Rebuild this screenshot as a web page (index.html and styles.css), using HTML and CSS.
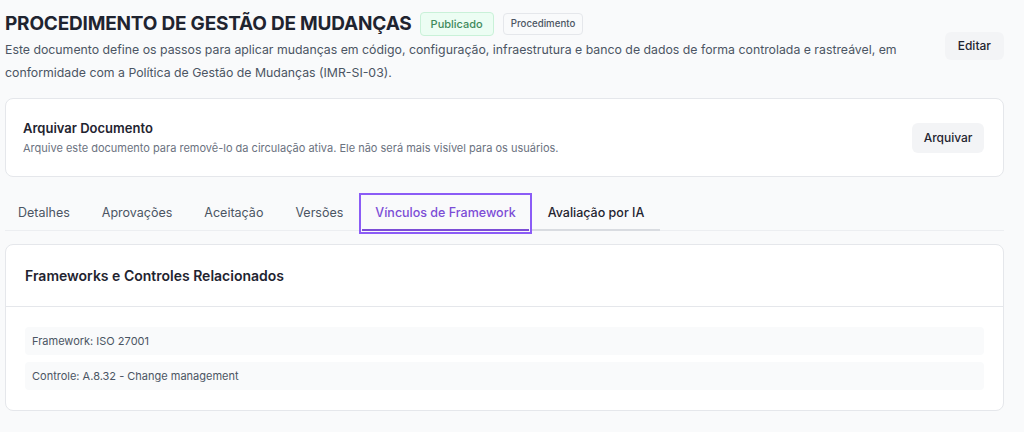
FILE: index.html
```html
<!DOCTYPE html>
<html lang="pt-BR">
<head>
  <meta charset="UTF-8" />
  <meta name="viewport" content="width=device-width, initial-scale=1.0"/>
  <title>Procedimento de Gestão de Mudanças</title>
  <link rel="stylesheet" href="styles.css">
</head>
<body>

  <div class="page">

    <div class="doc-header">
      <div class="doc-info">
        <div class="title-row">
          <h1 class="doc-title">PROCEDIMENTO DE GESTÃO DE MUDANÇAS</h1>
          <span class="badge badge-green">Publicado</span>
          <span class="badge badge-gray">Procedimento</span>
        </div>
        <p class="doc-description">
          Este documento define os passos para aplicar mudanças em código, configuração, infraestrutura e banco de dados de forma controlada e rastreável, em conformidade com a Política de Gestão de Mudanças (IMR-SI-03).
        </p>
      </div>
      <button class="btn btn-edit">Editar</button>
    </div>

    <div class="card archive-card">
      <div>
        <div class="archive-title">Arquivar Documento</div>
        <div class="archive-text">Arquive este documento para removê-lo da circulação ativa. Ele não será mais visível para os usuários.</div>
      </div>
      <button class="btn">Arquivar</button>
    </div>

    <div class="tabs">
      <a href="#" class="tab">Detalhes</a>
      <a href="#" class="tab">Aprovações</a>
      <a href="#" class="tab">Aceitação</a>
      <a href="#" class="tab">Versões</a>
      <a href="#" class="tab tab-active">Vínculos de Framework</a>
      <a href="#" class="tab tab-hover">Avaliação por IA</a>
    </div>

    <div class="card links-card">
      <div class="links-header">Frameworks e Controles Relacionados</div>
      <div class="links-body">
        <div class="link-item">Framework: ISO 27001</div>
        <div class="link-item">Controle: A.8.32 - Change management</div>
      </div>
    </div>

  </div>

</body>
</html>
```

FILE: styles.css
```css
body {
  margin: 0;
  padding: 0;
  font-family: Inter, "Noto Sans", sans-serif;
  background-color: #f9fafb;
  color: #111827;
}

.page {
  padding: 12px 20px 20px 5px;
}

/* header */
.doc-header {
  display: flex;
  align-items: center;
  justify-content: space-between;
  gap: 40px;
}

.title-row {
  display: flex;
  align-items: center;
  gap: 9px;
  height: 24px;
}

.doc-title {
  margin: 0 -1px 0 0;
  font-size: 19px;
  line-height: 24px;
  font-weight: 700;
  color: #1f2430;
  letter-spacing: -0.2px;
}

.badge {
  font-weight: 500;
  border-radius: 4px;
  border: 1px solid;
}

.badge-green {
  font-size: 11px;
  line-height: 14px;
  padding: 4px 10px;
  color: #3f8a5c;
  background-color: #ecfdf3;
  border-color: #c9f1d8;
}

.badge-gray {
  font-size: 9.7px;
  line-height: 12px;
  padding: 4px 7px;
  color: #4b5563;
  background-color: #f9fafb;
  border-color: #e5e7eb;
}

.doc-description {
  margin: 2px 0 0 0;
  font-size: 12.3px;
  line-height: 23px;
  color: #4b5563;
}

.btn {
  font-family: inherit;
  font-size: 12px;
  line-height: 16px;
  font-weight: 500;
  color: #1f2430;
  background-color: #f3f4f6;
  border: none;
  border-radius: 6px;
  padding: 6px 13px;
  flex-shrink: 0;
}

.btn-edit {
  margin-bottom: 5px;
}

/* cards */
.card {
  background-color: #fff;
  border: 1px solid #e5e7eb;
  border-radius: 8px;
}

.archive-card {
  margin-top: 14px;
  padding: 21px 19px 20px 17px;
  display: flex;
  align-items: center;
  justify-content: space-between;
}

.archive-title {
  font-size: 13px;
  line-height: 16px;
  font-weight: 600;
  color: #1f2430;
}

.archive-text {
  margin-top: 5px;
  font-size: 11px;
  line-height: 15px;
  color: #6b7280;
}

.archive-card .btn {
  padding: 7px 11.5px;
}

/* tabs */
.tabs {
  margin-top: 19px;
  display: flex;
  border-bottom: 1px solid #eceef1;
}

.tab {
  padding: 9px 16px 8px 16px;
  font-size: 12.5px;
  line-height: 16px;
  color: #4b5563;
  text-decoration: none;
  border-bottom: 2px solid transparent;
  margin-bottom: -1px;
}

.tab:first-child {
  padding-left: 13px;
}

/* focused tab: ring sits 3px outside the underline */
.tab-active {
  margin-left: 3px;
  margin-right: 3px;
  padding-left: 13px;
  padding-right: 13px;
  color: #7c4dd6;
  border-bottom-color: #7c4dd6;
  outline: 2px solid #8b5cf6;
  outline-offset: 1px;
  font-weight: 500;
}

.tab-hover {
  color: #1f2430;
  border-bottom-color: #d9dce1;
  font-weight: 500;
}

.links-card {
  margin-top: 13px;
}

.links-header {
  padding: 22px 19px;
  font-size: 14px;
  line-height: 17px;
  font-weight: 600;
  color: #1f2430;
  border-bottom: 1px solid #e5e7eb;
}

.links-body {
  padding: 20px 19px 20px 19px;
  display: flex;
  flex-direction: column;
  gap: 7px;
}

.link-item {
  padding: 7px 7px;
  font-size: 11px;
  line-height: 14px;
  color: #4b5563;
  background-color: #f9fafb;
  border-radius: 4px;
}
```
